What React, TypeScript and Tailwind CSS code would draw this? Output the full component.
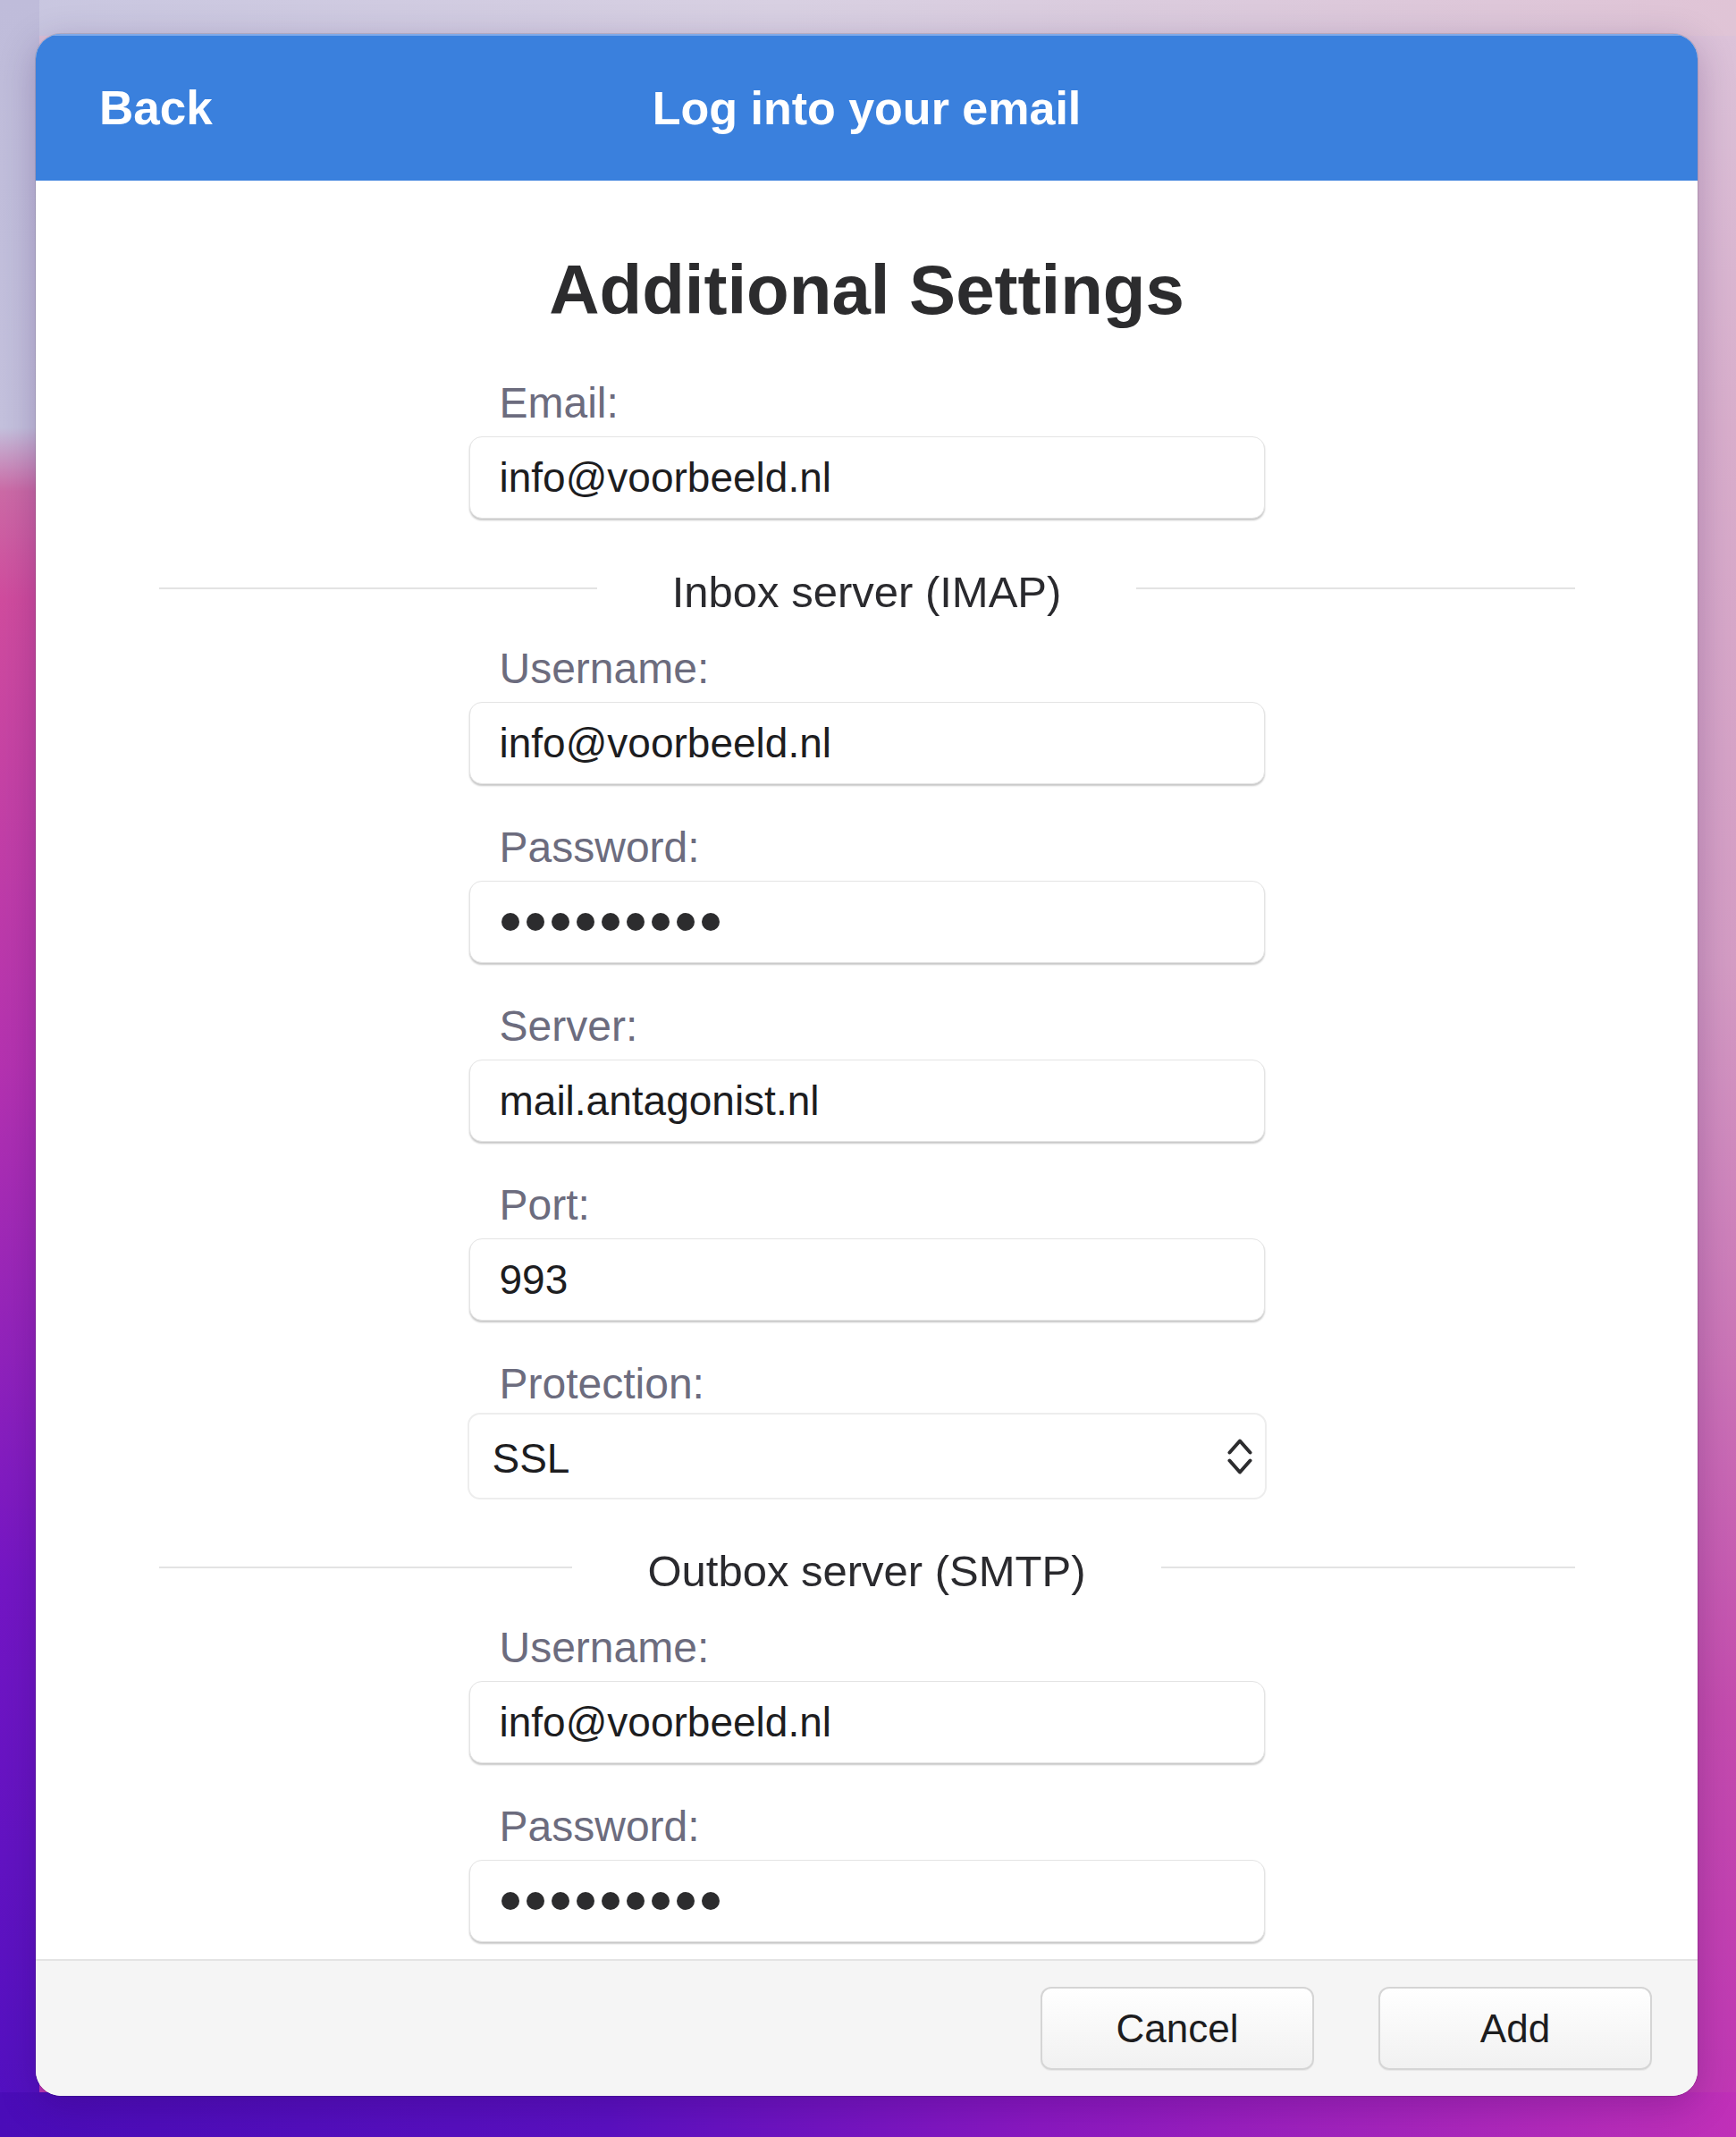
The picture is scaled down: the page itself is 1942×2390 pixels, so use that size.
import React from 'react';

const FONT = { fontFamily: '"Liberation Sans", Arial, Helvetica, sans-serif' };

interface FieldProps {
  label: string;
  value?: string;
  secret?: boolean;
  className?: string;
}

// Text field in the macOS style: label above, rounded white box with a soft bottom shadow
const Field: React.FC<FieldProps> = ({ label, value, secret, className = '' }) => (
  <div className={className}>
    <div className="pl-[34px] text-[48px] leading-[56px] text-[#6c6c7e]">{label}</div>
    <div className="mt-[9px] flex h-[92px] items-center rounded-[14px] border border-[#e4e4e4] bg-white px-[33px] shadow-[0_2px_2px_rgba(0,0,0,0.22)]">
      {secret ? (
        <div className="flex items-center gap-[8px] pl-[2px]">
          {Array.from({ length: 9 }).map((_, i) => (
            <span key={i} className="h-[20px] w-[20px] rounded-full bg-[#2c2c2e]" />
          ))}
        </div>
      ) : (
        <span className="text-[46px] leading-none text-[#1d1d1f]">{value}</span>
      )}
    </div>
  </div>
);

const Divider: React.FC<{ title: string; className?: string }> = ({ title, className = '' }) => (
  <div className={`-mx-[347px] flex h-[56px] items-center ${className}`}>
    <div className="h-[2px] flex-1 bg-[#e3e3e3]" />
    <span className="px-[84px] pt-[8px] text-[49px] leading-none text-[#2a2a2e]">{title}</span>
    <div className="h-[2px] flex-1 bg-[#e3e3e3]" />
  </div>
);

const Button: React.FC<{ children: React.ReactNode }> = ({ children }) => (
  <button className="flex h-[93px] w-[306px] items-center justify-center rounded-[12px] border-2 border-[#d5d5d5] bg-[linear-gradient(180deg,#ffffff_0%,#f1f1f1_100%)] text-[44px] text-[#1d1d1f] shadow-[0_1px_1px_rgba(0,0,0,0.06)]">
    {children}
  </button>
);

export default function App() {
  return (
    <div
      style={FONT}
      className="h-[2390px] w-[1942px] overflow-hidden pl-[40px] pt-[38px] [background:linear-gradient(90deg,#4a0cb8_0%,#5a10c0_35%,#8a18c0_60%,#c030b8_100%)_bottom/100%_50px_no-repeat,linear-gradient(180deg,#bfbcda_0%,#c4c1dd_20%,#cc6aa6_23%,#d04c9e_28%,#b432b0_50%,#7416c4_74%,#5010c0_100%)_left/44px_100%_no-repeat,linear-gradient(90deg,#c8c6e0_0%,#d8d0e2_45%,#e0c4d6_100%)_top/100%_40px_no-repeat,linear-gradient(180deg,#dcc4da_0%,#d9aecc_20%,#d49cc4_45%,#cc78b8_62%,#c44cae_80%,#c035b5_100%)]"
    >
      <div className="flex w-[1859px] flex-col overflow-hidden rounded-[28px] bg-white shadow-[0_10px_40px_rgba(40,0,80,0.25)] ring-1 ring-black/10">
        {/* Title bar */}
        <div className="grid h-[164px] grid-cols-[1fr_auto_1fr] items-center border-t-2 border-[#7eaaea] bg-[#3a80dd] text-white">
          <span className="pl-[71px] text-[53px] font-bold">Back</span>
          <span className="text-[52px] font-bold">Log into your email</span>
          <span />
        </div>

        {/* Form */}
        <div className="mx-auto flex w-[890px] flex-col pb-[19px] pt-[77px]">
          <h1 className="text-center text-[78px] font-bold leading-[90px] text-[#2c2c2e]">Additional Settings</h1>

          <Field label="Email:" value="info@voorbeeld.nl" className="mt-[54px]" />

          <Divider title="Inbox server (IMAP)" className="mt-[50px]" />
          <Field label="Username:" value="info@voorbeeld.nl" className="mt-[34px]" />
          <Field label="Password:" secret className="mt-[43px]" />
          <Field label="Server:" value="mail.antagonist.nl" className="mt-[43px]" />
          <Field label="Port:" value="993" className="mt-[43px]" />

          <div className="mt-[43px]">
            <div className="pl-[34px] text-[48px] leading-[56px] text-[#6c6c7e]">Protection:</div>
            <div className="-mx-[2px] mt-[4px] flex h-[97px] items-center justify-between rounded-[14px] border-2 border-[#ededed] bg-white pl-[26px] pr-[14px]">
              <span className="pt-[4px] text-[46px] leading-none text-[#1d1d1f]">SSL</span>
              <svg width="28" height="42" viewBox="0 0 28 42" fill="none" stroke="#2c2c2e" strokeWidth="4" strokeLinecap="round" strokeLinejoin="round">
                <path d="M2.5 16.5 L14 3.5 L25.5 16.5" />
                <path d="M2.5 25.5 L14 38.5 L25.5 25.5" />
              </svg>
            </div>
          </div>

          <Divider title="Outbox server (SMTP)" className="mt-[48px]" />
          <Field label="Username:" value="info@voorbeeld.nl" className="mt-[34px]" />
          <Field label="Password:" secret className="mt-[43px]" />
        </div>

        {/* Footer */}
        <div className="flex h-[153px] items-center justify-end gap-[72px] border-t-2 border-[#e4e4e4] bg-[#f5f5f5] pr-[51px]">
          <Button>Cancel</Button>
          <Button>Add</Button>
        </div>
      </div>
    </div>
  );
}
